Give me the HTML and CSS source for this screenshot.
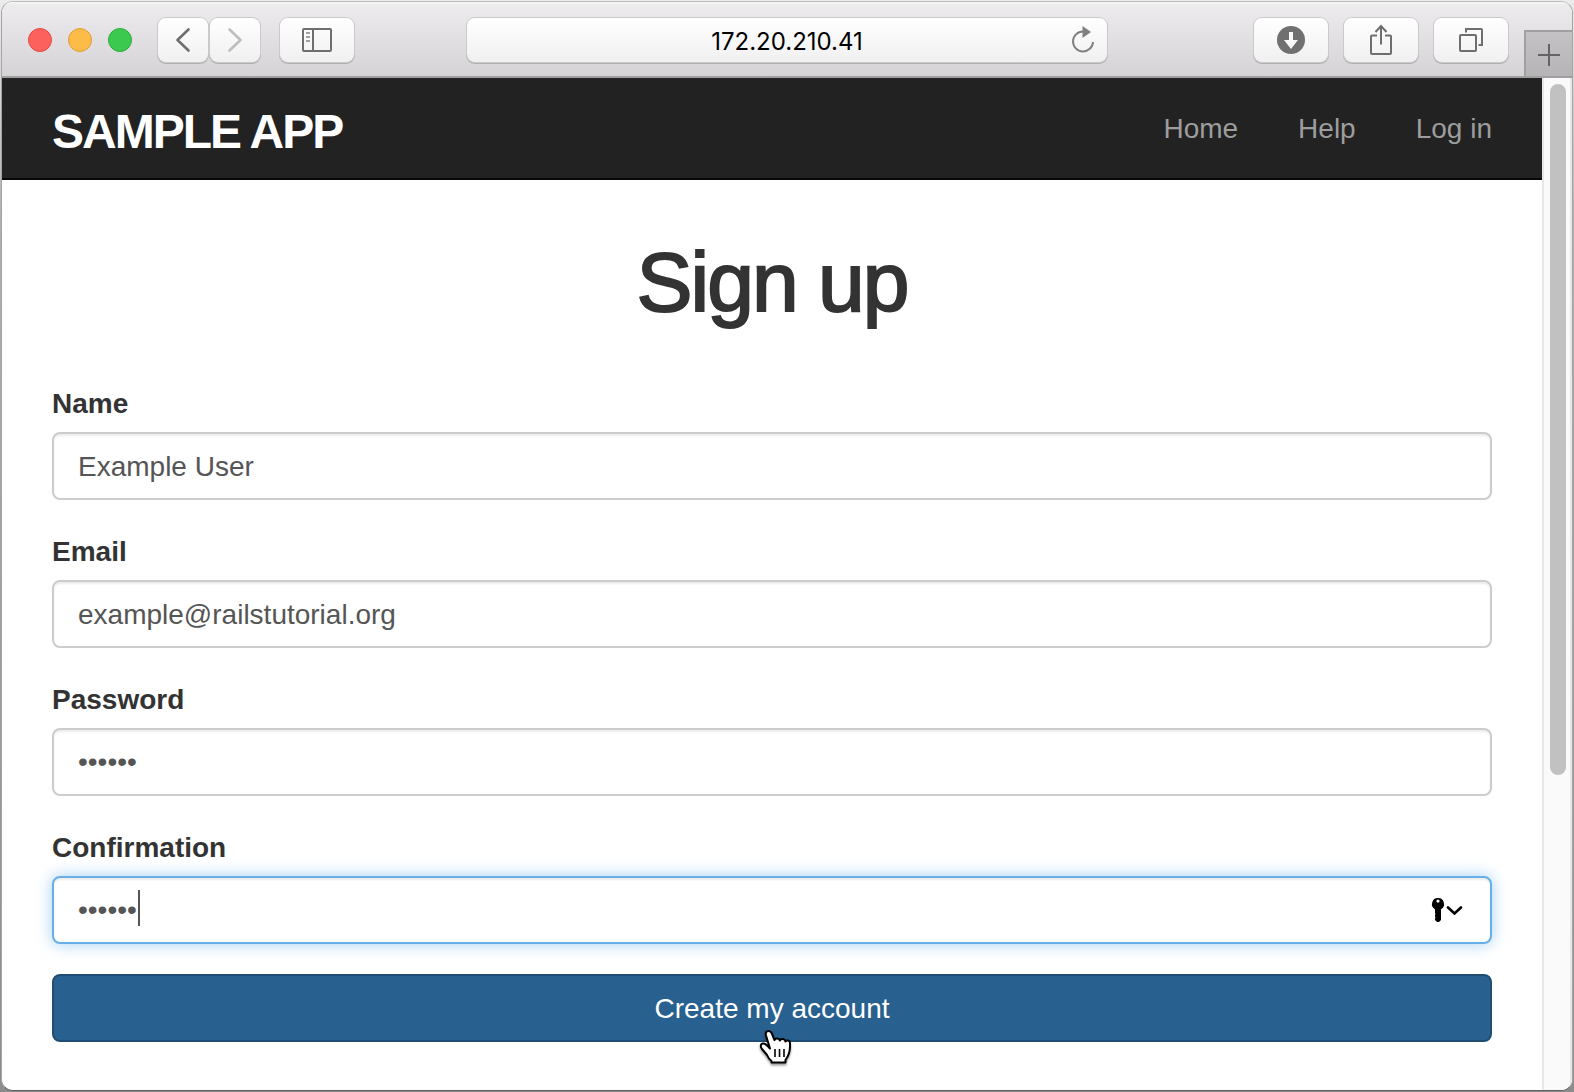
FILE: index.html
```html
<!DOCTYPE html>
<html lang="en">
<head>
<meta charset="utf-8">
<meta name="viewport" content="width=device-width, initial-scale=1">
<title>Sign up | Sample App</title>
<link rel="stylesheet" href="styles.css">
</head>
<body>
<div class="window">
  <div class="toolbar">
    <div class="toolbar-left">
      <div class="lights">
        <button class="light light-close" type="button" aria-label="Close"></button>
        <button class="light light-minimize" type="button" aria-label="Minimize"></button>
        <button class="light light-zoom" type="button" aria-label="Zoom"></button>
      </div>
      <div class="history">
        <button class="tool tool-narrow" type="button" aria-label="Back">
          <svg width="16" height="26" viewBox="0 0 16 26" fill="none" stroke="#6e6e6e" stroke-width="2.6" stroke-linecap="round" stroke-linejoin="round"><path d="M13.500 2.500 2.500 13l11 10.500"/></svg>
        </button>
        <button class="tool tool-narrow" type="button" aria-label="Forward">
          <svg width="16" height="26" viewBox="0 0 16 26" fill="none" stroke="#bdbdbd" stroke-width="2.6" stroke-linecap="round" stroke-linejoin="round"><path d="M2.500 2.500 13.500 13 2.500 23.500"/></svg>
        </button>
      </div>
      <button class="tool" type="button" aria-label="Show sidebar">
        <svg width="30" height="24" viewBox="0 0 30 24" fill="none" stroke="#6e6e6e" stroke-width="2"><rect x="1" y="1" width="28" height="22" rx="1"/><path d="M11 1v22"/><path d="M4 5h4M4 9h4M4 13h4" stroke="#a0a0a0"/></svg>
      </button>
    </div>
    <div class="address">
      <input class="address-input" type="text" value="172.20.210.41" aria-label="Address">
      <button class="reload" type="button" aria-label="Reload">
        <svg width="24" height="28" viewBox="0 0 24 28"><path d="M12 5.500A10 10 0 1 0 22 16" fill="none" stroke="#808080" stroke-width="2"/><path d="M11.500 0v12l8.500-6z" fill="#808080"/></svg>
      </button>
    </div>
    <div class="toolbar-right">
      <button class="tool" type="button" aria-label="Downloads">
        <svg width="28" height="28" viewBox="0 0 28 28"><circle cx="14" cy="14" r="14" fill="#707070"/><path d="M12 6h4v8h5l-7 9-7-9h5z" fill="#fafafa"/></svg>
      </button>
      <button class="tool" type="button" aria-label="Share">
        <svg width="24" height="32" viewBox="0 0 24 32" fill="none" stroke="#6e6e6e" stroke-width="2"><path d="M8 11.500H3q-1 0-1 1V29q0 1 1 1h18q1 0 1-1V12.500q0-1-1-1h-5"/><path d="M12 20.500V2.500M6.500 8 12 2l5.500 6"/></svg>
      </button>
      <button class="tool" type="button" aria-label="Show all tabs">
        <svg width="26" height="26" viewBox="0 0 26 26" fill="none" stroke="#6e6e6e" stroke-width="2"><rect x="2" y="8" width="16" height="16" rx="1"/><path d="M8 5.500V2h15q1 0 1 1v15h-3.500"/></svg>
      </button>
      <button class="new-tab" type="button" aria-label="New tab">
        <svg width="22" height="22" viewBox="0 0 22 22" stroke="#646464" stroke-width="2"><path d="M11 0v22M0 11h22"/></svg>
      </button>
    </div>
  </div>

  <div class="viewport">
    <div class="page">
      <header class="navbar">
        <a class="brand" href="#">SAMPLE APP</a>
        <nav class="links">
          <a class="link" href="#">Home</a>
          <a class="link" href="#">Help</a>
          <a class="link" href="#">Log in</a>
        </nav>
      </header>
      <main class="content">
        <h1 class="title">Sign up</h1>
        <form class="form">
          <div class="field">
            <label class="label" for="name">Name</label>
            <input class="control" id="name" type="text" value="Example User">
          </div>
          <div class="field">
            <label class="label" for="email">Email</label>
            <input class="control" id="email" type="email" value="example@railstutorial.org">
          </div>
          <div class="field">
            <label class="label" for="password">Password</label>
            <input class="control" id="password" type="password" value="foobar">
          </div>
          <div class="field">
            <label class="label" for="confirmation">Confirmation</label>
            <div class="control-wrap">
              <input class="control control-active" id="confirmation" type="password" value="foobar">
              <span class="caret"></span>
              <button class="keychain" type="button" aria-label="Fill password">
                <svg width="32" height="26" viewBox="0 0 32 26"><path fill-rule="evenodd" d="M7 1a6 6 0 0 1 3 11.200V23l-2 2H6l-2-2v-1.500l.5-1-.5-1V18l.5-1-.5-1v-3.800A6 6 0 0 1 7 1zm0 1.500a1.600 1.600 0 1 0 0 3.200 1.600 1.600 0 0 0 0-3.200z"/><path d="M17 10.500 23.500 16.500l6.500-6" fill="none" stroke="#000" stroke-width="2.600" stroke-linecap="round"/></svg>
              </button>
            </div>
          </div>
          <div class="submit-wrap">
            <button class="submit" type="button">Create my account</button>
            <svg class="pointer" width="34" height="38" viewBox="0 0 34 38"><path d="M9.500 2C7 2 6.300 4 7 6.500L11 19.500C8.500 16.500 6 14 3.500 14.500 1 15.500 1.500 18 3 20L8 26C9 28.500 11 31 12.500 32V33.500H26.500V31C29.500 27 31 22 31 17.500V14C31 11.500 27.500 10.500 26.500 12.500 26 9.500 22 9 20.800 11.500 20 9 16.500 9 15.500 11L13 5C12.300 3 11 2 9.500 2Z" fill="#fff" stroke="#000" stroke-width="2" stroke-linejoin="round"/><path d="M16 20v8M20.500 20v8M25 20v8" stroke="#000" stroke-width="1.600"/></svg>
          </div>
        </form>
      </main>
    </div>
    <div class="scrollbar"><div class="thumb"></div></div>
  </div>
</div>
</body>
</html>
```
FILE: styles.css
```css
* {
  box-sizing: border-box;
}

body {
  margin: 0;
  padding: 1px;
  background: linear-gradient(#ececec, #b0b0b0 20%, #8c8c8c);
  font-family: "Liberation Sans", Arial, sans-serif;
  font-size: 28px;
  line-height: 40px;
  color: #333;
}

button,
input {
  margin: 0;
  font: inherit;
}

svg {
  display: block;
}

.window {
  display: flex;
  flex-direction: column;
  min-height: calc(100vh - 2px);
  overflow: hidden;
  border: 1px solid #a4a4a4;
  border-top-color: #bcbcbc;
  border-bottom-color: #606060;
  border-radius: 12px;
  background: #fff;
}

/* Browser toolbar */
.toolbar {
  display: grid;
  grid-template-columns: 1fr minmax(200px, 640px) 1fr;
  align-items: center;
  height: 76px;
  padding-top: 2px;
  border-bottom: 2px solid #a0a0a0;
  background: linear-gradient(#f8f8f8, #edebed 3px, #d5d3d5);
}

.toolbar-left,
.toolbar-right,
.lights,
.history {
  display: flex;
  align-items: center;
}

.toolbar-left {
  padding-left: 26px;
}

.lights {
  gap: 16px;
  margin-right: 26px;
}

.light {
  width: 24px;
  height: 24px;
  padding: 0;
  border: 1px solid;
  border-radius: 50%;
}

.light-close {
  background: #fc615d;
  border-color: #e04946;
}

.light-minimize {
  background: #fdbc48;
  border-color: #df9e37;
}

.light-zoom {
  background: #3bc950;
  border-color: #2bac38;
}

.history {
  gap: 2px;
  margin-right: 20px;
}

.tool,
.address-input {
  height: 44px;
  border: 0;
  border-radius: 8px;
  background: linear-gradient(#fff, #f0f0f0);
  box-shadow: 0 0 0 1px #cbc9cb, 0 1px 0 1px #b0aeb0;
}

.tool {
  display: flex;
  align-items: center;
  justify-content: center;
  width: 74px;
  padding: 0;
}

.tool-narrow {
  width: 50px;
}

.address {
  position: relative;
}

.address-input {
  display: block;
  width: 100%;
  padding: 2px 40px 0;
  font-family: Inter, "Liberation Sans", sans-serif;
  font-size: 24px;
  text-align: center;
  color: #000;
}

.reload {
  position: absolute;
  top: 8px;
  right: 12px;
  padding: 0;
  border: 0;
  background: none;
}

.toolbar-right {
  align-self: stretch;
  justify-content: flex-end;
  gap: 16px;
}

.new-tab {
  display: flex;
  align-items: center;
  justify-content: center;
  align-self: flex-end;
  width: 48px;
  height: 46px;
  padding: 2px 0 0;
  border: 0 solid #a0a0a0;
  border-width: 2px 0 0 2px;
  background: linear-gradient(#c4c2c4, #b6b4b6);
}

/* Page and its scroll bar */
.viewport {
  display: flex;
  flex: 1;
}

.page {
  flex: 1;
  min-width: 0;
}

.scrollbar {
  width: 30px;
  padding: 6px 4px 4px 6px;
  border: 0 solid #e7e7e7;
  border-width: 0 2px;
  background: #fafafa;
}

.thumb {
  width: 16px;
  height: 69%;
  border-radius: 8px;
  background: #c1c1c1;
}

.navbar {
  display: flex;
  align-items: center;
  justify-content: space-between;
  height: 102px;
  padding: 0 50px;
  border-bottom: 2px solid #080808;
  background: #222;
}

.brand {
  padding-top: 8px;
  font-size: 48px;
  font-weight: 700;
  letter-spacing: -2px;
  color: #fff;
  text-decoration: none;
}

.links {
  display: flex;
  gap: 60px;
  padding-top: 2px;
}

.link {
  color: #9d9d9d;
  text-decoration: none;
}

.content {
  padding: 56px 50px 48px;
}

.title {
  margin: 0 0 54px;
  font-size: 84px;
  font-weight: 400;
  line-height: 92px;
  letter-spacing: -2px;
  text-align: center;
  -webkit-text-stroke: 2px #333;
}

.field {
  margin-bottom: 30px;
}

.label {
  display: block;
  padding-top: 2px;
  margin-bottom: 8px;
  font-weight: 700;
}

.control {
  display: block;
  width: 100%;
  height: 68px;
  padding: 14px 24px 12px;
  border: 2px solid #ccc;
  border-radius: 8px;
  background: #fff;
  box-shadow: inset 0 2px 2px rgba(0, 0, 0, 0.075);
  color: #555;
}

.control[type="password"] {
  padding: 12px 24px;
}

.control-wrap,
.submit-wrap {
  position: relative;
}

.control-active {
  border-color: #66afe9;
  box-shadow: inset 0 2px 2px rgba(0, 0, 0, 0.075), 0 0 16px rgba(102, 175, 233, 0.6);
}

.caret {
  position: absolute;
  top: 14px;
  left: 86px;
  width: 2px;
  height: 36px;
  background: #555;
}

.keychain {
  position: absolute;
  top: 21px;
  right: 29px;
  padding: 0;
  border: 0;
  background: none;
}

.submit {
  display: block;
  width: 100%;
  height: 68px;
  padding: 2px 24px 0;
  border: 2px solid #204d74;
  border-radius: 8px;
  background: #286090;
  color: #fff;
}

.pointer {
  position: absolute;
  top: 55px;
  left: calc(50% - 13px);
  filter: drop-shadow(0 2px 1px rgba(0, 0, 0, 0.4));
}
```
